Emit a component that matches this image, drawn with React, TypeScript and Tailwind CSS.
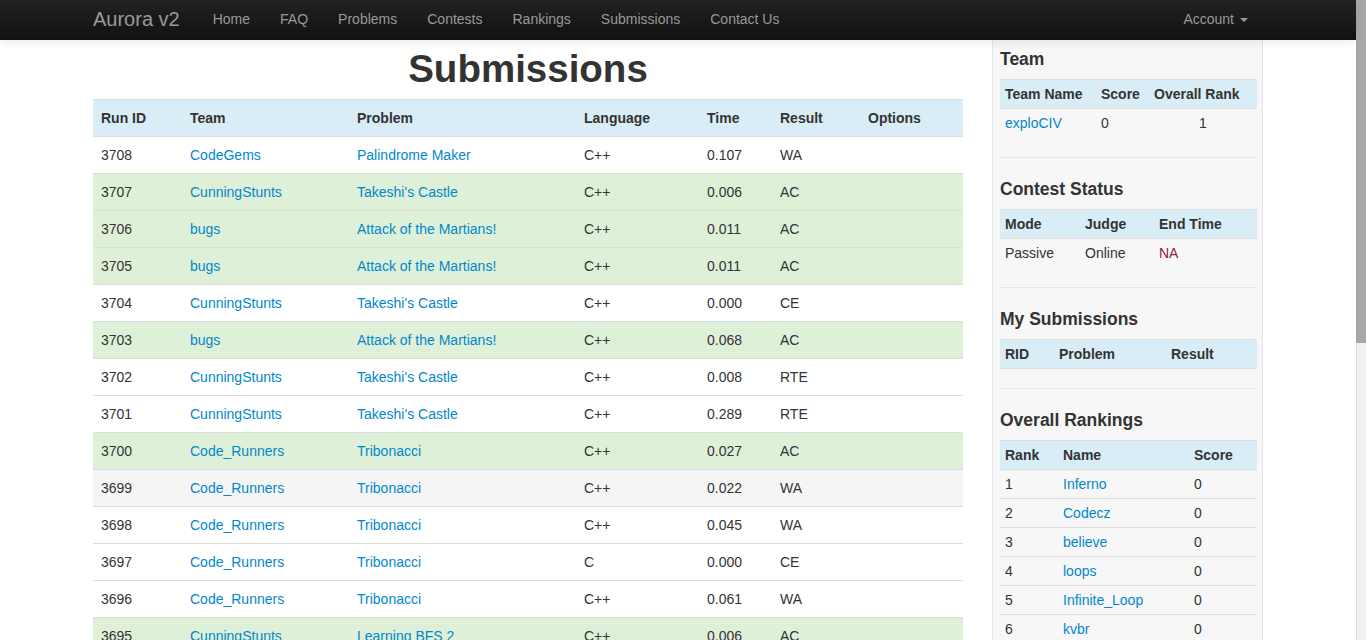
type Tone = "white" | "green" | "gray";

interface Submission {
  id: string;
  team: string;
  problem: string;
  lang: string;
  time: string;
  result: string;
  tone: Tone;
}

const submissions: Submission[] = [
  { id: "3708", team: "CodeGems", problem: "Palindrome Maker", lang: "C++", time: "0.107", result: "WA", tone: "white" },
  { id: "3707", team: "CunningStunts", problem: "Takeshi's Castle", lang: "C++", time: "0.006", result: "AC", tone: "green" },
  { id: "3706", team: "bugs", problem: "Attack of the Martians!", lang: "C++", time: "0.011", result: "AC", tone: "green" },
  { id: "3705", team: "bugs", problem: "Attack of the Martians!", lang: "C++", time: "0.011", result: "AC", tone: "green" },
  { id: "3704", team: "CunningStunts", problem: "Takeshi's Castle", lang: "C++", time: "0.000", result: "CE", tone: "white" },
  { id: "3703", team: "bugs", problem: "Attack of the Martians!", lang: "C++", time: "0.068", result: "AC", tone: "green" },
  { id: "3702", team: "CunningStunts", problem: "Takeshi's Castle", lang: "C++", time: "0.008", result: "RTE", tone: "white" },
  { id: "3701", team: "CunningStunts", problem: "Takeshi's Castle", lang: "C++", time: "0.289", result: "RTE", tone: "white" },
  { id: "3700", team: "Code_Runners", problem: "Tribonacci", lang: "C++", time: "0.027", result: "AC", tone: "green" },
  { id: "3699", team: "Code_Runners", problem: "Tribonacci", lang: "C++", time: "0.022", result: "WA", tone: "gray" },
  { id: "3698", team: "Code_Runners", problem: "Tribonacci", lang: "C++", time: "0.045", result: "WA", tone: "white" },
  { id: "3697", team: "Code_Runners", problem: "Tribonacci", lang: "C", time: "0.000", result: "CE", tone: "white" },
  { id: "3696", team: "Code_Runners", problem: "Tribonacci", lang: "C++", time: "0.061", result: "WA", tone: "white" },
  { id: "3695", team: "CunningStunts", problem: "Learning BFS 2", lang: "C++", time: "0.006", result: "AC", tone: "green" },
];

const rankings = ["Inferno", "Codecz", "believe", "loops", "Infinite_Loop", "kvbr"];

const navLinks = ["Home", "FAQ", "Problems", "Contests", "Rankings", "Submissions", "Contact Us"];

const toneBg: Record<Tone, string> = {
  white: "bg-white",
  green: "bg-[#dff0d8]",
  gray: "bg-[#f5f5f5]",
};

const SideHead = ({ cols }: { cols: string[] }) => (
  <thead>
    <tr>
      {cols.map((c) => (
        <th
          key={c}
          className="h-[30px] border-y border-[#ddd] bg-[#d9edf7] px-[5px] text-left align-middle font-bold"
        >
          {c}
        </th>
      ))}
    </tr>
  </thead>
);

const cellCls = (i: number) =>
  i === 0
    ? "h-[28px] px-[5px] align-middle"
    : "h-[29px] border-t border-[#ddd] px-[5px] align-middle";

const SideTitle = ({ children }: { children: string }) => (
  <h4 className="mb-[9px] text-[17.5px] font-bold leading-[22px]">{children}</h4>
);

const App = () => {
  return (
    <div className="flex h-[640px] overflow-hidden bg-white font-['Liberation_Sans',Arial,sans-serif] text-[14px] leading-5 text-[#333]">
      <div className="flex w-[1356px] flex-col">
        {/* Navbar */}
        <nav className="relative z-10 h-10 shrink-0 bg-gradient-to-b from-[#222] to-[#111] shadow-[0_1px_10px_rgba(0,0,0,0.1)]">
          <div className="mx-auto flex h-10 w-[1170px] items-start pt-[9px]">
            <span className="pr-[18px] text-[20px] leading-5 text-[#999]">Aurora v2</span>
            {navLinks.map((l) => (
              <span key={l} className="px-[15px] text-[#999]">
                {l}
              </span>
            ))}
            <span className="ml-auto flex h-5 items-center px-[15px] text-[#999]">
              Account
              <span className="ml-[6px] mt-[1px] h-0 w-0 border-x-4 border-t-4 border-x-transparent border-t-[#999]" />
            </span>
          </div>
        </nav>

        <div className="mx-auto flex min-h-0 w-[1170px] flex-1">
          {/* Main */}
          <main className="w-[870px] shrink-0">
            <h1 className="mb-[8px] mt-[7px] text-center text-[38.5px] font-bold leading-[44px]">
              Submissions
            </h1>
            <table className="w-full table-fixed border-separate border-spacing-0">
              <colgroup>
                <col className="w-[89px]" />
                <col className="w-[167px]" />
                <col className="w-[227px]" />
                <col className="w-[123px]" />
                <col className="w-[73px]" />
                <col className="w-[88px]" />
                <col className="w-[103px]" />
              </colgroup>
              <thead>
                <tr>
                  {["Run ID", "Team", "Problem", "Language", "Time", "Result", "Options"].map((h) => (
                    <th
                      key={h}
                      className="h-[38px] border-y border-[#ddd] bg-[#d9edf7] px-2 text-left align-middle font-bold"
                    >
                      {h}
                    </th>
                  ))}
                </tr>
              </thead>
              <tbody>
                {submissions.map((s) => (
                  <tr key={s.id} className={toneBg[s.tone]}>
                    <td className="h-[37px] border-b border-[#ddd] px-2 align-middle">{s.id}</td>
                    <td className="h-[37px] border-b border-[#ddd] px-2 align-middle text-[#0088cc]">{s.team}</td>
                    <td className="h-[37px] border-b border-[#ddd] px-2 align-middle text-[#0088cc]">{s.problem}</td>
                    <td className="h-[37px] border-b border-[#ddd] px-2 align-middle">{s.lang}</td>
                    <td className="h-[37px] border-b border-[#ddd] px-2 align-middle">{s.time}</td>
                    <td className="h-[37px] border-b border-[#ddd] px-2 align-middle">{s.result}</td>
                    <td className="h-[37px] border-b border-[#ddd] px-2 align-middle"></td>
                  </tr>
                ))}
              </tbody>
            </table>
          </main>

          {/* Sidebar */}
          <aside className="ml-[29px] w-[271px] shrink-0 border-x border-[#e3e3e3] bg-[#f7f7f7] pl-[7px] pr-[5px] pt-[8px]">
            <SideTitle>Team</SideTitle>
            <table className="w-full table-fixed border-separate border-spacing-0">
              <colgroup>
                <col className="w-[96px]" />
                <col className="w-[53px]" />
                <col className="w-[108px]" />
              </colgroup>
              <SideHead cols={["Team Name", "Score", "Overall Rank"]} />
              <tbody>
                <tr>
                  <td className={cellCls(0) + " text-[#0088cc]"}>exploCIV</td>
                  <td className={cellCls(0)}>0</td>
                  <td className={cellCls(0) + " text-center"}>1</td>
                </tr>
              </tbody>
            </table>
            <hr className="my-5 border-t border-[#e6e6e6]" />

            <SideTitle>Contest Status</SideTitle>
            <table className="w-full table-fixed border-separate border-spacing-0">
              <colgroup>
                <col className="w-[80px]" />
                <col className="w-[74px]" />
                <col className="w-[103px]" />
              </colgroup>
              <SideHead cols={["Mode", "Judge", "End Time"]} />
              <tbody>
                <tr>
                  <td className={cellCls(0)}>Passive</td>
                  <td className={cellCls(0)}>Online</td>
                  <td className={cellCls(0) + " text-[#8c2349]"}>NA</td>
                </tr>
              </tbody>
            </table>
            <hr className="my-5 border-t border-[#e6e6e6]" />

            <SideTitle>My Submissions</SideTitle>
            <table className="w-full table-fixed border-separate border-spacing-0">
              <colgroup>
                <col className="w-[54px]" />
                <col className="w-[112px]" />
                <col className="w-[91px]" />
              </colgroup>
              <SideHead cols={["RID", "Problem", "Result"]} />
              <tbody></tbody>
            </table>
            <hr className="mb-5 mt-[19px] border-t border-[#e6e6e6]" />

            <SideTitle>Overall Rankings</SideTitle>
            <table className="w-full table-fixed border-separate border-spacing-0">
              <colgroup>
                <col className="w-[58px]" />
                <col className="w-[131px]" />
                <col className="w-[68px]" />
              </colgroup>
              <SideHead cols={["Rank", "Name", "Score"]} />
              <tbody>
                {rankings.map((name, i) => (
                  <tr key={name}>
                    <td className={cellCls(i)}>{i + 1}</td>
                    <td className={cellCls(i) + " text-[#0088cc]"}>{name}</td>
                    <td className={cellCls(i)}>0</td>
                  </tr>
                ))}
              </tbody>
            </table>
          </aside>
        </div>
      </div>

      {/* Scrollbar */}
      <div className="flex w-[10px] shrink-0 flex-col">
        <div className="h-[343px] bg-[#a8a8a8]" />
        <div className="flex-1 border-l border-[#e0e0e0] bg-[#f1f1f1]" />
      </div>
    </div>
  );
};

export default App;
